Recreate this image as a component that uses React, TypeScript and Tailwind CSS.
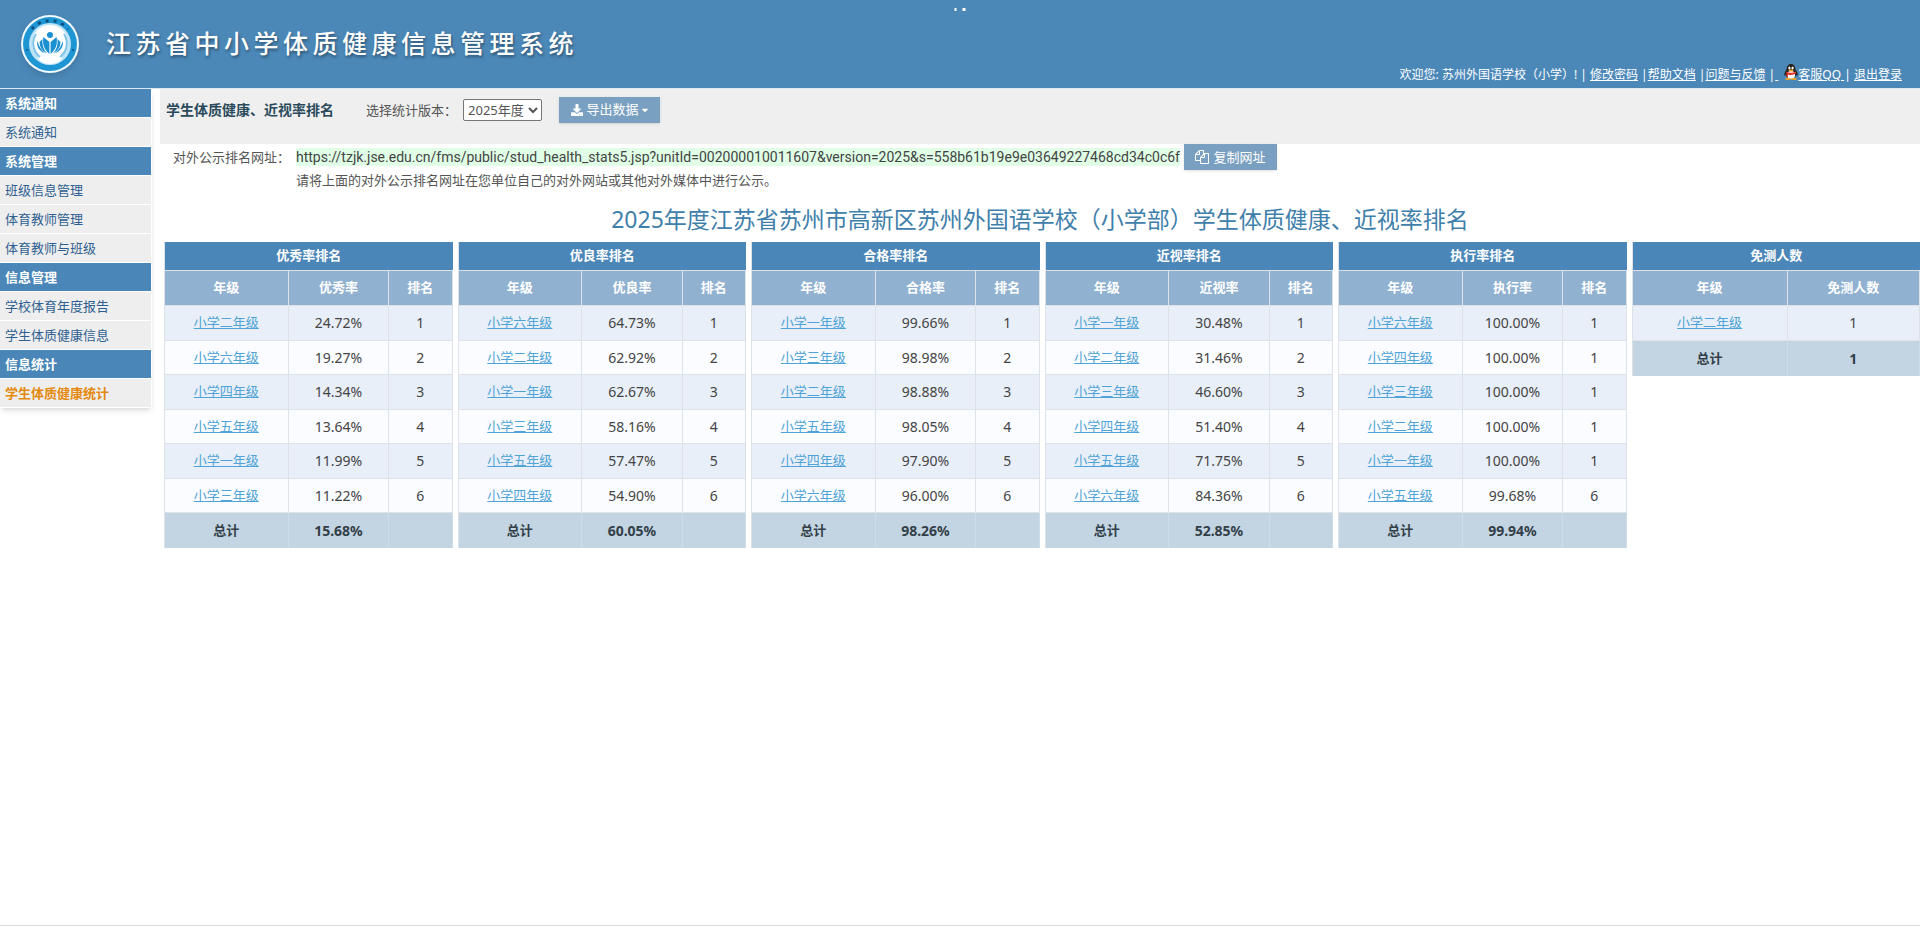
import { FaDownload, FaCaretDown } from "react-icons/fa";

type RankRow = { grade: string; rate: string; rank?: string };

type RankTableData = {
  title: string;
  rateLabel: string;
  rows: RankRow[];
  total: string;
  hasRank: boolean;
};

// ─── Data ─────────────────────────────────────────────────────────────────────

const MENU = [
  { title: "系统通知", items: ["系统通知"] },
  { title: "系统管理", items: ["班级信息管理", "体育教师管理", "体育教师与班级"] },
  { title: "信息管理", items: ["学校体育年度报告", "学生体质健康信息"] },
  { title: "信息统计", items: ["学生体质健康统计"] },
];

const ACTIVE_ITEM = "学生体质健康统计";

const PUBLIC_URL =
  "https://tzjk.jse.edu.cn/fms/public/stud_health_stats5.jsp?unitId=002000010011607&version=2025&s=558b61b19e9e03649227468cd34c0c6f";

const TABLES: RankTableData[] = [
  {
    title: "优秀率排名",
    rateLabel: "优秀率",
    hasRank: true,
    total: "15.68%",
    rows: [
      { grade: "小学二年级", rate: "24.72%", rank: "1" },
      { grade: "小学六年级", rate: "19.27%", rank: "2" },
      { grade: "小学四年级", rate: "14.34%", rank: "3" },
      { grade: "小学五年级", rate: "13.64%", rank: "4" },
      { grade: "小学一年级", rate: "11.99%", rank: "5" },
      { grade: "小学三年级", rate: "11.22%", rank: "6" },
    ],
  },
  {
    title: "优良率排名",
    rateLabel: "优良率",
    hasRank: true,
    total: "60.05%",
    rows: [
      { grade: "小学六年级", rate: "64.73%", rank: "1" },
      { grade: "小学二年级", rate: "62.92%", rank: "2" },
      { grade: "小学一年级", rate: "62.67%", rank: "3" },
      { grade: "小学三年级", rate: "58.16%", rank: "4" },
      { grade: "小学五年级", rate: "57.47%", rank: "5" },
      { grade: "小学四年级", rate: "54.90%", rank: "6" },
    ],
  },
  {
    title: "合格率排名",
    rateLabel: "合格率",
    hasRank: true,
    total: "98.26%",
    rows: [
      { grade: "小学一年级", rate: "99.66%", rank: "1" },
      { grade: "小学三年级", rate: "98.98%", rank: "2" },
      { grade: "小学二年级", rate: "98.88%", rank: "3" },
      { grade: "小学五年级", rate: "98.05%", rank: "4" },
      { grade: "小学四年级", rate: "97.90%", rank: "5" },
      { grade: "小学六年级", rate: "96.00%", rank: "6" },
    ],
  },
  {
    title: "近视率排名",
    rateLabel: "近视率",
    hasRank: true,
    total: "52.85%",
    rows: [
      { grade: "小学一年级", rate: "30.48%", rank: "1" },
      { grade: "小学二年级", rate: "31.46%", rank: "2" },
      { grade: "小学三年级", rate: "46.60%", rank: "3" },
      { grade: "小学四年级", rate: "51.40%", rank: "4" },
      { grade: "小学五年级", rate: "71.75%", rank: "5" },
      { grade: "小学六年级", rate: "84.36%", rank: "6" },
    ],
  },
  {
    title: "执行率排名",
    rateLabel: "执行率",
    hasRank: true,
    total: "99.94%",
    rows: [
      { grade: "小学六年级", rate: "100.00%", rank: "1" },
      { grade: "小学四年级", rate: "100.00%", rank: "1" },
      { grade: "小学三年级", rate: "100.00%", rank: "1" },
      { grade: "小学二年级", rate: "100.00%", rank: "1" },
      { grade: "小学一年级", rate: "100.00%", rank: "1" },
      { grade: "小学五年级", rate: "99.68%", rank: "6" },
    ],
  },
  {
    title: "免测人数",
    rateLabel: "免测人数",
    hasRank: false,
    total: "1",
    rows: [{ grade: "小学二年级", rate: "1" }],
  },
];

// ─── Icons ────────────────────────────────────────────────────────────────────

function Logo() {
  return (
    <svg viewBox="0 0 60 60" className="h-[60px] w-[60px] shrink-0 drop-shadow-md" aria-hidden="true">
      <circle cx="30" cy="30" r="29" fill="#f4fbff" />
      <circle cx="30" cy="30" r="27" fill="#1e96d4" />
      {/* dark marks along the top of the ring */}
      <path d="M12 15A23.5 23.5 0 0 1 48 15" fill="none" stroke="#0d4f80" strokeWidth="3" strokeDasharray="3 5" />
      <circle cx="7" cy="36" r="1" fill="#0d4f80" />
      <circle cx="53" cy="36" r="1" fill="#0d4f80" />
      <circle cx="30" cy="30" r="21" fill="#bfe4f7" />
      <circle cx="30" cy="29" r="18" fill="#fff" />
      <ellipse cx="30" cy="43" rx="12" ry="7" fill="#fff" />
      <path d="M16 20a17 17 0 0 0 4 23M44 20a17 17 0 0 1-4 23" fill="none" stroke="#7cc4ea" strokeWidth="2" />
      {/* figure with open book petals */}
      <g fill="#1b8fd0">
        <circle cx="30" cy="21" r="3" />
        <path d="M29.4 40V28l-6-5c-1 6 0 12 6 17zM30.6 40V28l6-5c1 6 0 12-6 17z" />
        <path d="M22.5 25c-.5 6 1 11 4.500 14c-4-1-7.500-6-7.500-11zM37.500 25c.5 6-1 11-4.500 14c4-1 7.500-6 7.500-11z" />
        <path d="M17 27c-.5 6 3 11 8 12c-4-3-6-7-8-12zM43 27c.5 6-3 11-8 12c4-3 6-7 8-12z" />
      </g>
    </svg>
  );
}

function Penguin() {
  return (
    <svg viewBox="0 0 14 16" className="inline h-4 w-[14px] align-[-1px]" aria-hidden="true">
      <path d="M7 0c3 0 4.500 2.500 4.500 5.500c1.500 2 2.500 4 2 6c-.6.500-1 0-1.500-.8c-.5 2.500-2 4-5 4s-4.500-1.500-5-4c-.5.800-1 1.300-1.500.8c-.5-2 .5-4 2-6C2.500 2.500 4 0 7 0z" fill="#26221f" />
      <ellipse cx="7" cy="11" rx="4" ry="4" fill="#fff" />
      <ellipse cx="5.400" cy="4" rx="1.100" ry="1.500" fill="#fff" />
      <ellipse cx="8.600" cy="4" rx="1.100" ry="1.500" fill="#fff" />
      <path d="M2 7.500q5 2.500 10 0v2q-5 2.500-8 1v2.500h-1.500v-3.500z" fill="#e0362c" />
      <ellipse cx="7" cy="6.500" rx="2.500" ry="1" fill="#f5a623" />
      <ellipse cx="4" cy="15" rx="3" ry="1" fill="#f5a623" />
      <ellipse cx="10" cy="15" rx="3" ry="1" fill="#f5a623" />
    </svg>
  );
}

function CopyIcon() {
  return (
    <svg viewBox="0 0 1792 1792" fill="currentColor" className="h-3.5 w-3.5" aria-hidden="true">
      <path d="M1696 384q40 0 68 28t28 68v1216q0 40-28 68t-68 28h-960q-40 0-68-28t-28-68v-288h-544q-40 0-68-28t-28-68v-672q0-40 20-88t48-76l408-408q28-28 76-48t88-20h416q40 0 68 28t28 68v328q68-40 128-40h416zm-544 213l-299 299h299v-299zm-640-384l-299 299h299v-299zm196 647l316-316v-416h-384v416q0 40-28 68t-68 28h-416v640h512v-256q0-40 20-88t48-76zm956 804v-1152h-384v416q0 40-28 68t-68 28h-416v640h896z" />
    </svg>
  );
}

// ─── Header ───────────────────────────────────────────────────────────────────

function Header() {
  return (
    <header className="relative flex h-[88px] justify-between bg-[#4b88b8] pl-5 pr-[18px] text-white">
      <div className="flex items-center gap-[26px]">
        <Logo />
        <h1 className="text-[25px] font-medium tracking-[0.18em] [text-shadow:1px_2px_3px_rgba(0,0,0,0.4)]">
          江苏省中小学体质健康信息管理系统
        </h1>
      </div>
      <span className="absolute left-1/2 top-2 flex -translate-x-1/2 gap-1.5">
        <i className="h-[3px] w-0.5 bg-white" />
        <i className="h-[3px] w-[3px] bg-white" />
      </span>
      <div className="self-end pb-[3px] text-xs leading-5 whitespace-pre">
        欢迎您: 苏州外国语学校（小学）! |{" "}
        <a href="#password" className="underline">修改密码</a> |
        <a href="#help" className="underline">帮助文档</a> |
        <a href="#feedback" className="underline">问题与反馈</a> |
        <a href="#qq" className="underline">{" "}<span className="inline-block w-1.5" /><Penguin />客服QQ </a>|{" "}
        <a href="#logout" className="underline">退出登录</a>
      </div>
    </header>
  );
}

// ─── Sidebar ──────────────────────────────────────────────────────────────────

function Sidebar() {
  return (
    <nav className="w-[152px] shrink-0 self-start border-r border-white bg-[#eee] text-[13px] shadow-md">
      {MENU.map((group) => (
        <section key={group.title}>
          <h2 className="h-[29px] border-b border-white bg-[#4a86b7] pl-[5px] font-bold leading-7 text-white">
            {group.title}
          </h2>
          <ul>
            {group.items.map((item) => (
              <li key={item} className="h-[29px] border-b border-white pl-[5px] leading-7">
                <a
                  href="#menu"
                  className={item === ACTIVE_ITEM ? "font-bold text-[#e48a10]" : "text-[#2f5f90]"}
                >
                  {item}
                </a>
              </li>
            ))}
          </ul>
        </section>
      ))}
    </nav>
  );
}

// ─── Ranking table ────────────────────────────────────────────────────────────

function RankTable({ data }: { data: RankTableData }) {
  const cell = "border-r border-b border-[#dde2e8] p-0";
  return (
    <table className="w-full table-fixed border-separate border-spacing-0 border-l border-[#dde2e8] text-center text-[13px] text-[#444]">
      <colgroup>
        <col className={data.hasRank ? "w-[43%]" : "w-[54%]"} />
        <col />
        {data.hasRank && <col className="w-[22%]" />}
      </colgroup>
      <thead className="text-white">
        <tr className="h-[29px] bg-[#4a86b7]">
          <th colSpan={data.hasRank ? 3 : 2} className="border-b border-[#dde2e8] p-0">{data.title}</th>
        </tr>
        <tr className="h-[35px] bg-[#90b1d0]">
          <th className={cell}>年级</th>
          <th className={cell}>{data.rateLabel}</th>
          {data.hasRank && <th className={cell}>排名</th>}
        </tr>
      </thead>
      <tbody>
        {data.rows.map((row) => (
          <tr key={row.grade} className="odd:h-[35px] odd:bg-[#e8eff8] even:h-[34px] even:bg-[#fbfcff]">
            <td className={cell}>
              <a href="#grade" className="text-[#4fa3d6] underline">{row.grade}</a>
            </td>
            <td className={`${cell} text-sm`}>{row.rate}</td>
            {data.hasRank && <td className={`${cell} text-sm`}>{row.rank}</td>}
          </tr>
        ))}
      </tbody>
      <tfoot className="font-bold text-[#333f48]">
        <tr className="h-[35px] bg-[#c3d5e3]">
          <td className="border-r border-[#d0dde8] p-0">总计</td>
          <td className="border-r border-[#d0dde8] p-0 text-sm">{data.total}</td>
          {data.hasRank && <td className="border-r border-[#d0dde8] p-0" />}
        </tr>
      </tfoot>
    </table>
  );
}

// ─── Page ─────────────────────────────────────────────────────────────────────

export default function App() {
  return (
    <div className="flex min-h-screen flex-col bg-white font-['Noto_Sans','Noto_Sans_CJK_SC',sans-serif]">
      <Header />
      <div className="flex flex-1 border-t border-[#dbe9f5]">
        <Sidebar />
        <main className="min-w-0 flex-1 pl-2">
          <div className="flex h-[55px] items-start bg-[#efefef] pl-1.5 pt-2 text-[13px] text-[#555]">
            <h2 className="mr-8 text-sm font-bold leading-[26px] text-[#2b4a5c]">学生体质健康、近视率排名</h2>
            <label htmlFor="version" className="mr-1.5 leading-[26px]">选择统计版本：</label>
            <select id="version" className="mr-[17px] mt-0.5 h-[22px] w-[79px] rounded-xs border border-[#767676] bg-white">
              <option>2025年度</option>
            </select>
            <button className="flex h-[26px] w-[101px] items-center justify-center gap-0.5 bg-[#7aa0c1] text-white shadow-sm">
              <FaDownload className="mr-0.5 h-3 w-3" />
              导出数据
              <FaCaretDown className="h-2.5 w-2" />
            </button>
          </div>

          <div className="flex pl-[13px] text-[13px] leading-[26px] text-[#555]">
            <div className="w-[123px] shrink-0">对外公示排名网址：</div>
            <div>
              <div className="flex items-center gap-1">
                <span className="bg-[#e0ffe6] font-['Roboto',sans-serif] text-sm leading-[18px] text-[#444]">{PUBLIC_URL}</span>
                <button className="flex h-[26px] w-[93px] items-center justify-center gap-1 bg-[#7aa0c1] text-white shadow-sm">
                  <CopyIcon />
                  复制网址
                </button>
              </div>
              <p className="leading-5">请将上面的对外公示排名网址在您单位自己的对外网站或其他对外媒体中进行公示。</p>
            </div>
          </div>

          <h3 className="mt-3 mb-1.5 text-center text-[23px] leading-[34px] text-[#3f80ab]">
            2025年度江苏省苏州市高新区苏州外国语学校（小学部）学生体质健康、近视率排名
          </h3>

          <div className="grid grid-cols-6 items-start gap-[5px] pl-1">
            {TABLES.map((table) => (
              <RankTable key={table.title} data={table} />
            ))}
          </div>
        </main>
      </div>
      <footer className="h-[10px] border-t border-[#ddd]" />
    </div>
  );
}
